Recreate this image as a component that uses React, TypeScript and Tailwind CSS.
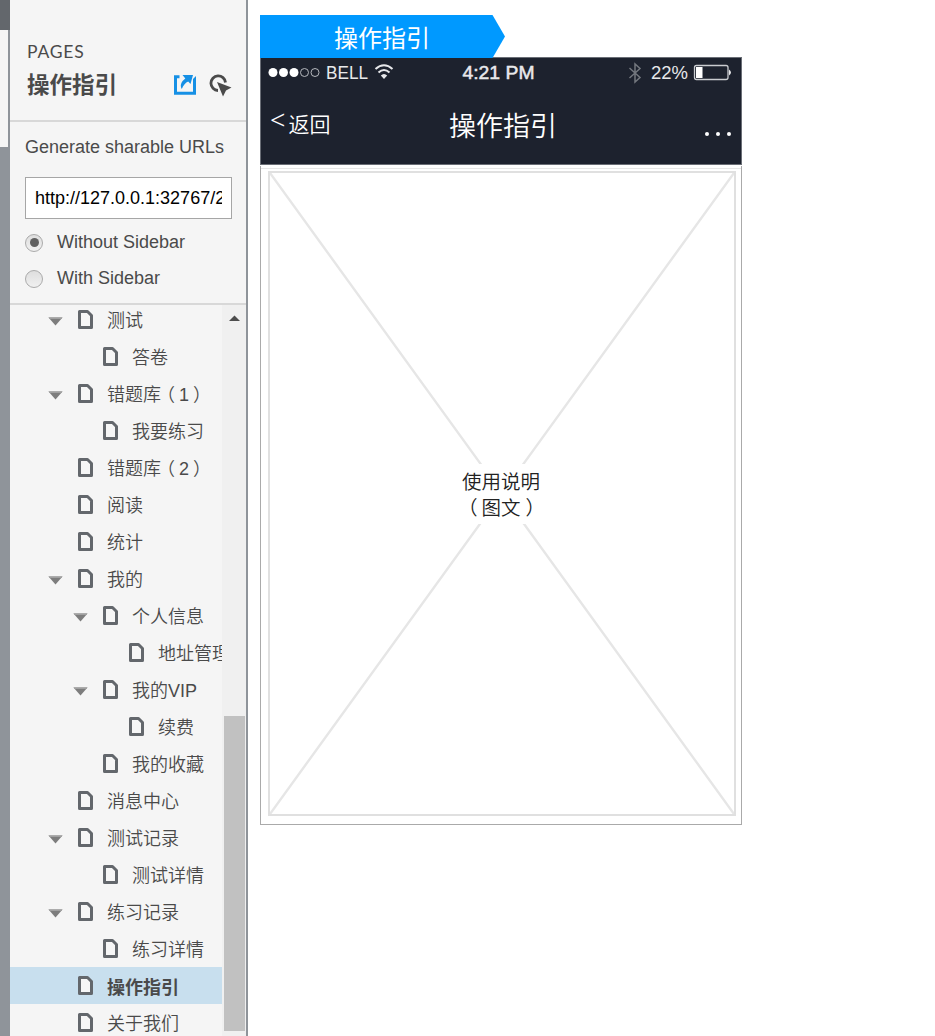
import React from "react";

type Page = { name: string; level: number; open?: boolean; current?: boolean; count?: string };

const pages: Page[] = [
  { name: "测试", level: 0, open: true },
  { name: "答卷", level: 1 },
  { name: "错题库", count: "1", level: 0, open: true },
  { name: "我要练习", level: 1 },
  { name: "错题库", count: "2", level: 0 },
  { name: "阅读", level: 0 },
  { name: "统计", level: 0 },
  { name: "我的", level: 0, open: true },
  { name: "个人信息", level: 1, open: true },
  { name: "地址管理", level: 2 },
  { name: "我的VIP", level: 1, open: true },
  { name: "续费", level: 2 },
  { name: "我的收藏", level: 1 },
  { name: "消息中心", level: 0 },
  { name: "测试记录", level: 0, open: true },
  { name: "测试详情", level: 1 },
  { name: "练习记录", level: 0, open: true },
  { name: "练习详情", level: 1 },
  { name: "操作指引", level: 0, current: true },
  { name: "关于我们", level: 0 },
];

const indents = ["pl-[38px]", "pl-[63px]", "pl-[89px]"];

function PageRow({ page }: { page: Page }) {
  return (
    <li
      className={`flex h-[37px] shrink-0 items-center whitespace-nowrap text-[18px] leading-[37px] ${indents[page.level]} ${
        page.current ? "bg-[#c8dfee] font-bold" : "font-[350]"
      }`}
    >
      <svg className="mt-[3px] h-[9px] w-[15px] shrink-0" viewBox="0 0 15 9">
        {page.open && <path d="M.5 .5h14L7.500 8.500z" fill="#7d7d7d" />}
        {page.open && <path d="M.5 .5h14l-1.200 1.500H1.700z" fill="#a0a0a0" />}
      </svg>
      <svg className="-mt-px ml-[15px] h-[19px] w-[15px] shrink-0" viewBox="0 0 15 19">
        <path d="M1.500 1.500H9.500L13.500 5.500V17.500H1.500z" fill="#f6f6f6" stroke="#63676c" strokeWidth="3" strokeLinejoin="round" />
      </svg>
      <span className={`ml-[14px] ${page.current ? "pt-[5px]" : "pt-[4px]"}`}>
        {page.name}
        {page.count && (
          <>
            <span className="-ml-[4px]">（</span>
            <span className="ml-[4px] font-normal">{page.count}</span>
            <span className="ml-[4px]">）</span>
          </>
        )}
      </span>
    </li>
  );
}

function Radio({ checked }: { checked?: boolean }) {
  return (
    <span className="mt-px flex size-[18px] items-center justify-center rounded-full border border-[#aaa] bg-linear-to-b from-[#dedede] to-[#f0f0f0]">
      {checked && <span className="size-[9px] rounded-full bg-[#606060]" />}
    </span>
  );
}

function Sidebar() {
  return (
    <aside className="flex h-full w-[238px] shrink-0 flex-col border-r-2 border-[#8f949a] bg-[#f5f5f5] text-[#4a4a4a]">
      <header className="h-[122px] shrink-0 border-b-2 border-[#d8d8d8] pt-[42px] pl-[17px]">
        <div className="h-5 font-['Lato',sans-serif] text-[17.500px] leading-5 tracking-[.8px]">PAGES</div>
        <div className="flex h-[46px] items-center">
          <h1 className="w-[147px] pt-[2px] text-[22.500px] leading-[46px] font-bold">操作指引</h1>
          <svg className="-mt-px h-5 w-[22px]" viewBox="0 0 22 20">
            <path d="M5.500 1.700H1.500V18.300H20.500V5" fill="none" stroke="#1690e5" strokeWidth="3" />
            <path d="M19 6V4L22 1V6z" fill="#1690e5" />
            <path d="M8.500 0H19L16.500 9L14.200 6.500C11.500 7.500 9.500 10 7.800 14C5.500 10 7.500 6.500 11.300 3.500z" fill="#1690e5" />
          </svg>
          <svg className="mt-px ml-[13px] h-[23px] w-[23px]" viewBox="0 0 23 23">
            <path d="M9 16.500A7.300 7.300 0 1 1 16.500 8.500" fill="none" stroke="#4a4a4a" strokeWidth="2.800" />
            <path d="M8 8L22.500 13.500L17 16.500L14 22.500z" fill="#4a4a4a" />
          </svg>
        </div>
      </header>
      <section className="h-[183px] shrink-0 border-b-2 border-[#d8d8d8] px-[15px] pt-[14px] text-[18px]">
        <p className="leading-[22px] whitespace-nowrap">Generate sharable URLs</p>
        <div className="mt-[19px] h-[42px] w-[207px] border border-[#a6a6a6] bg-white px-[9px]">
          <div className="overflow-hidden leading-10 whitespace-nowrap text-black">http://127.0.0.1:32767/2</div>
        </div>
        <div className="mt-[5px] flex h-9 items-center">
          <Radio checked />
          <span className="ml-[14px]">Without Sidebar</span>
        </div>
        <div className="flex h-9 items-center">
          <Radio />
          <span className="ml-[14px]">With Sidebar</span>
        </div>
      </section>
      <div className="flex min-h-0 flex-1">
        <ul className="-mt-1 flex w-[212px] flex-col overflow-hidden [clip-path:inset(4px_0_0_0)]">
          {pages.map((page, i) => (
            <PageRow key={i} page={page} />
          ))}
        </ul>
        <div className="flex w-6 flex-col items-center bg-[#f0f0f0]">
          <svg className="mt-[10px] h-[6px] w-[11px]" viewBox="0 0 11 6">
            <path d="M0 6L5.500 .5L11 6z" fill="#4d4d4d" />
          </svg>
          <div className="mt-[395px] h-[315px] w-[21px] bg-[#c1c1c1]" />
        </div>
      </div>
    </aside>
  );
}

function StatusBar() {
  return (
    <svg className="h-[32px] w-[480px] shrink-0 font-['Liberation_Sans',sans-serif]" viewBox="0 0 480 32" fill="#e8e9eb">
      <g fill="#fff">
        <circle cx="12" cy="14.500" r="4.500" />
        <circle cx="22.500" cy="14.500" r="4.500" />
        <circle cx="33" cy="14.500" r="4.500" />
      </g>
      <g fill="none" stroke="#b5b8bd">
        <circle cx="43.500" cy="14.500" r="4" />
        <circle cx="54" cy="14.500" r="4" />
      </g>
      <text x="65" y="21" fontSize="18" textLength="42" lengthAdjust="spacingAndGlyphs">BELL</text>
      <g fill="none" stroke="#e8e9eb" strokeWidth="2">
        <path d="M114.500 11Q123 3.500 131.500 11" />
        <path d="M117.500 14.500Q123 9.500 128.500 14.500" />
      </g>
      <path d="M123 21L119.800 17.500Q123 14.500 126.200 17.500z" />
      <text x="201.500" y="21" fontSize="18.500" stroke="#e8e9eb" strokeWidth=".5" textLength="72" lengthAdjust="spacingAndGlyphs">4:21 PM</text>
      <path d="M368.500 10L379 19.500L374 24V6L379 10.500L368.500 20" fill="none" stroke="#73777e" strokeWidth="1.500" />
      <text x="390" y="21" fontSize="18.500" textLength="37" lengthAdjust="spacingAndGlyphs">22%</text>
      <rect x="433.500" y="7.500" width="33.500" height="14" rx="2" fill="none" stroke="#c9ccd0" strokeWidth="1.300" />
      <rect x="435" y="9" width="6.500" height="11" fill="#fff" />
      <path d="M468 11.500Q472 14.500 468 17.500z" />
    </svg>
  );
}

function Phone() {
  return (
    <main className="flex w-[482px] flex-col pt-[15px]">
      <div className="h-[43px] w-[245px] bg-[#0099ff] pl-[74px] text-[24px] leading-[47px] text-white [clip-path:polygon(0_0,94.900%_0,100%_50%,94.900%_100%,0_100%)]">
        操作指引
      </div>
      <div className="-mt-px flex h-[108px] flex-col border border-[#6a6e76] bg-[#1d222e] text-white">
        <StatusBar />
        <div className="grid flex-1 grid-cols-3 font-[350]">
          <div className="flex pl-[9px]">
            <span className="font-['Noto_Sans',sans-serif] text-[27px] leading-[60px] font-light">&lt;</span>
            <span className="ml-[3px] text-[21px] leading-[70px]">返回</span>
          </div>
          <div className="pl-[28px] text-[27px] leading-[75px] font-[350]">操作指引</div>
          <div className="flex items-start justify-end gap-[7px] pt-[42px] pr-[10px]">
            <span className="size-1 rounded-full bg-white" />
            <span className="size-1 rounded-full bg-white" />
            <span className="size-1 rounded-full bg-white" />
          </div>
        </div>
      </div>
      <section className="mt-px flex h-[659px] flex-col border-x border-b border-[#aaa] bg-white pr-[5px] pb-[8px] pl-[7px]">
        <div className="mt-[2px] -mr-[5px] -ml-[7px] h-px shrink-0 bg-[#e6e6e6]" />
        <div className="mt-[2px] grid flex-1 grid-cols-1 grid-rows-1 border-2 border-[#e0e0e0]">
          <svg className="col-start-1 row-start-1 h-full w-full" viewBox="0 0 464 641" preserveAspectRatio="none">
            <path d="M0 0L464 641M464 0L0 641" stroke="#e6e6e6" strokeWidth="2.400" />
          </svg>
          <div className="col-start-1 row-start-1 h-[60px] w-[80px] place-self-center bg-white pt-[5px] text-center text-[19.500px] leading-[26px] font-[350] whitespace-nowrap text-[#222]">
            <div className="-ml-[2px]">使用说明</div>
            <div className="-ml-[2px]">
              <span className="relative -left-[4px]">（</span>图文<span className="relative left-[5px]">）</span>
            </div>
          </div>
        </div>
      </section>
    </main>
  );
}

export default function App() {
  return (
    <div className="flex h-[1036px] w-[935px] overflow-hidden bg-white font-['Liberation_Sans','Noto_Sans_CJK_SC',sans-serif]">
      <div className="flex w-[10px] shrink-0 flex-col bg-[#8f949a]">
        <div className="h-[30px] bg-[#63676c]" />
        <div className="h-[117px] w-2 bg-[#f5f5f5]" />
      </div>
      <Sidebar />
      <div className="pl-3">
        <Phone />
      </div>
    </div>
  );
}
